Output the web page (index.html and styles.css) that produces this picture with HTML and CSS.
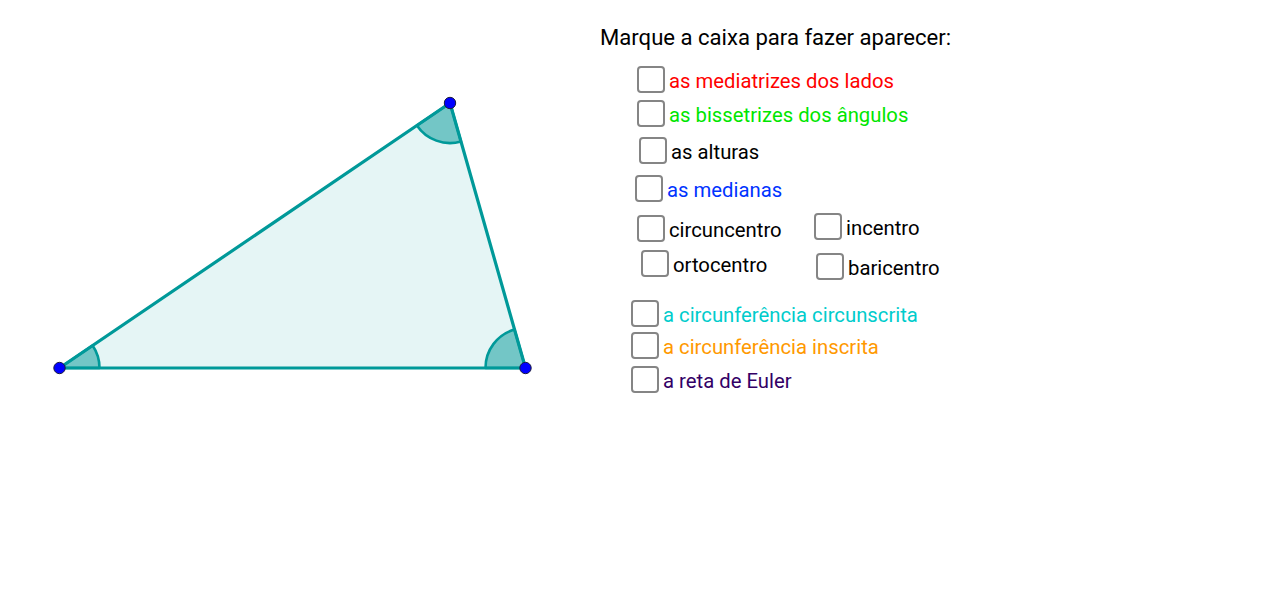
FILE: index.html
```html
<!DOCTYPE html>
<html lang="pt">
<head>
<meta charset="utf-8">
<title>Triângulo</title>
<link rel="stylesheet" href="styles.css">
</head>
<body>
<div class="applet">
  <svg class="drawing" width="1280" height="600" viewBox="0 0 1280 600">
    <polygon class="tri-fill" points="59.5,368 450,103 525.5,368"/>
    <path class="sector" d="M59.5 368 L99.5 368 A40 40 0 0 0 92.6 345.5 Z"/>
    <path class="sector" d="M450 103 L416.9 125.5 A40 40 0 0 0 461 141.5 Z"/>
    <path class="sector" d="M525.5 368 L485.5 368 A40 40 0 0 1 514.5 329.5 Z"/>
    <polygon class="tri-edge" points="59.5,368 450,103 525.5,368"/>
    <circle class="pt" cx="59.5" cy="368" r="5.7"/>
    <circle class="pt" cx="450" cy="103" r="5.7"/>
    <circle class="pt" cx="525.5" cy="368" r="5.7"/>
  </svg>

  <p class="title">Marque a caixa para fazer aparecer:</p>

  <label class="cb red" style="left:637px;top:66px"><span class="box"></span><span class="txt">as mediatrizes dos lados</span></label>
  <label class="cb green" style="left:637px;top:100px"><span class="box"></span><span class="txt">as bissetrizes dos ângulos</span></label>
  <label class="cb" style="left:639px;top:137px"><span class="box"></span><span class="txt">as alturas</span></label>
  <label class="cb blue" style="left:635px;top:175px"><span class="box"></span><span class="txt">as medianas</span></label>
  <label class="cb" style="left:637px;top:215px"><span class="box"></span><span class="txt">circuncentro</span></label>
  <label class="cb" style="left:814px;top:213px"><span class="box"></span><span class="txt">incentro</span></label>
  <label class="cb" style="left:641px;top:250px"><span class="box"></span><span class="txt">ortocentro</span></label>
  <label class="cb" style="left:816px;top:253px"><span class="box"></span><span class="txt">baricentro</span></label>
  <label class="cb cyan" style="left:631px;top:300px"><span class="box"></span><span class="txt">a circunferência circunscrita</span></label>
  <label class="cb orange" style="left:631px;top:332px"><span class="box"></span><span class="txt">a circunferência inscrita</span></label>
  <label class="cb purple" style="left:631px;top:366px"><span class="box"></span><span class="txt">a reta de Euler</span></label>
</div>
</body>
</html>
```

FILE: styles.css
```css
html, body {
  margin: 0;
  padding: 0;
  background: #ffffff;
}

.applet {
  position: relative;
  width: 1280px;
  height: 600px;
  overflow: hidden;
  font-family: Roboto, "Liberation Sans", sans-serif;
  font-size: 20.3px;
  color: #000000;
}

.drawing {
  position: absolute;
  left: 0;
  top: 0;
}

.tri-fill {
  fill: #e5f5f5;
  stroke: none;
}

.sector {
  fill: #73c6c6;
  stroke: #009999;
  stroke-width: 2.6;
  stroke-linejoin: round;
}

.tri-edge {
  fill: none;
  stroke: #009999;
  stroke-width: 3.2;
  stroke-linejoin: round;
}

.pt {
  fill: #0000ff;
  stroke: #1a1a40;
  stroke-width: 1;
}

.title {
  position: absolute;
  left: 600px;
  top: 24px;
  margin: 0;
  font-size: 22.1px;
  line-height: 26px;
  white-space: nowrap;
}

.cb {
  position: absolute;
  display: flex;
  align-items: center;
  gap: 4px;
  line-height: 24px;
  white-space: nowrap;
  cursor: pointer;
}

.txt {
  padding-top: 2px;
}

.box {
  box-sizing: border-box;
  width: 28px;
  height: 27px;
  border: 2px solid #858585;
  border-radius: 4px;
  background: #ffffff;
  flex: none;
}

.red { color: #ff0000; }
.green { color: #00e600; }
.blue { color: #0033ff; }
.cyan { color: #00cccc; }
.orange { color: #ff9900; }
.purple { color: #330066; }
```
